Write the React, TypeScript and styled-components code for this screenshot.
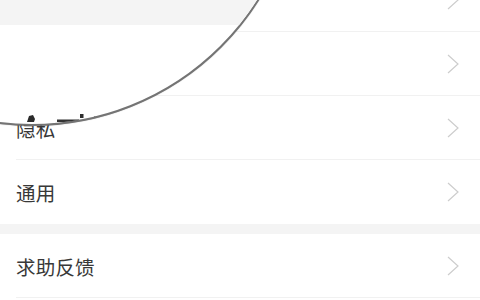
import React from "react";
import styled, { createGlobalStyle } from "styled-components";

const Global = createGlobalStyle`
  html, body { margin: 0; padding: 0; background: #ffffff; }
  body { width: 480px; height: 300px; overflow: hidden; }
  * { box-sizing: border-box; }
`;

const Page = styled.div`
  position: relative;
  width: 480px;
  height: 300px;
  overflow: hidden;
  background: #ffffff;
  font-family: "Noto Sans CJK SC", "Noto Sans", sans-serif;
`;

const List = styled.div`
  display: flex;
  flex-direction: column;
  margin-top: -32px;
`;

const Section = styled.div`
  display: flex;
  flex-direction: column;
  background: #ffffff;
`;

const Gap = styled.div`
  height: 10px;
  background: #f4f4f4;
`;

const Row = styled.div`
  height: 64px;
  padding-left: 16px;
  display: flex;
`;

const RowInner = styled.div<{ $divider: boolean }>`
  flex: 1;
  display: flex;
  align-items: center;
  justify-content: space-between;
  padding-right: 21px;
  border-bottom: 1px solid ${(p) => (p.$divider ? "#f1f1f1" : "transparent")};
`;

const Label = styled.span`
  font-size: 19.5px;
  color: #383838;
  line-height: 1;
  letter-spacing: 0.2px;
  margin-top: 2px;
`;

const Magnifier = styled.div`
  position: absolute;
  left: -236px;
  top: -410px;
  width: 536px;
  height: 536px;
  border-radius: 50%;
  overflow: hidden;
  background: #ffffff;
  border: 2px solid #747474;
  box-shadow: 0 0 1px rgba(0, 0, 0, 0.35);
`;

const MagBand = styled.div`
  position: absolute;
  left: 0;
  top: 0;
  width: 100%;
  height: 433px;
  background: #f4f4f4;
`;

const Fragments = styled.svg`
  position: absolute;
  left: 234px;
  top: 408px;
`;

const Chevron = () => (
  <svg width="12" height="20" viewBox="0 0 12 20">
    <polyline
      points="1,1 11,10 1,19"
      fill="none"
      stroke="#cdcdcd"
      strokeWidth="1.2"
      strokeLinejoin="miter"
    />
  </svg>
);

type Item = { label: string; divider: boolean };

const sections: Item[][] = [
  [
    { label: "账号与安全", divider: true },
    { label: "消息通知", divider: true },
    { label: "隐私", divider: true },
    { label: "通用", divider: false },
  ],
  [{ label: "求助反馈", divider: true }],
];

export default function App() {
  return (
    <>
      <Global />
      <Page>
        <List>
          {sections.map((items, si) => (
            <React.Fragment key={si}>
              {si > 0 && <Gap />}
              <Section>
                {items.map((it) => (
                  <Row key={it.label}>
                    <RowInner $divider={it.divider}>
                      <Label>{it.label}</Label>
                      <Chevron />
                    </RowInner>
                  </Row>
                ))}
              </Section>
            </React.Fragment>
          ))}
        </List>
        <Magnifier>
          <MagBand />
          <Fragments width="120" height="130" viewBox="0 0 120 130">
            <path d="M27 122 L29 116 L33 115 L35 119 L34 122 Z" fill="#2a2a2a" />
            <rect x="57" y="119.5" width="22" height="2.5" fill="#333333" />
            <rect x="80" y="114" width="3.5" height="4" fill="#2e2e2e" />
            <rect x="94" y="116" width="3" height="1.5" fill="#555555" />
          </Fragments>
        </Magnifier>
      </Page>
    </>
  );
}
